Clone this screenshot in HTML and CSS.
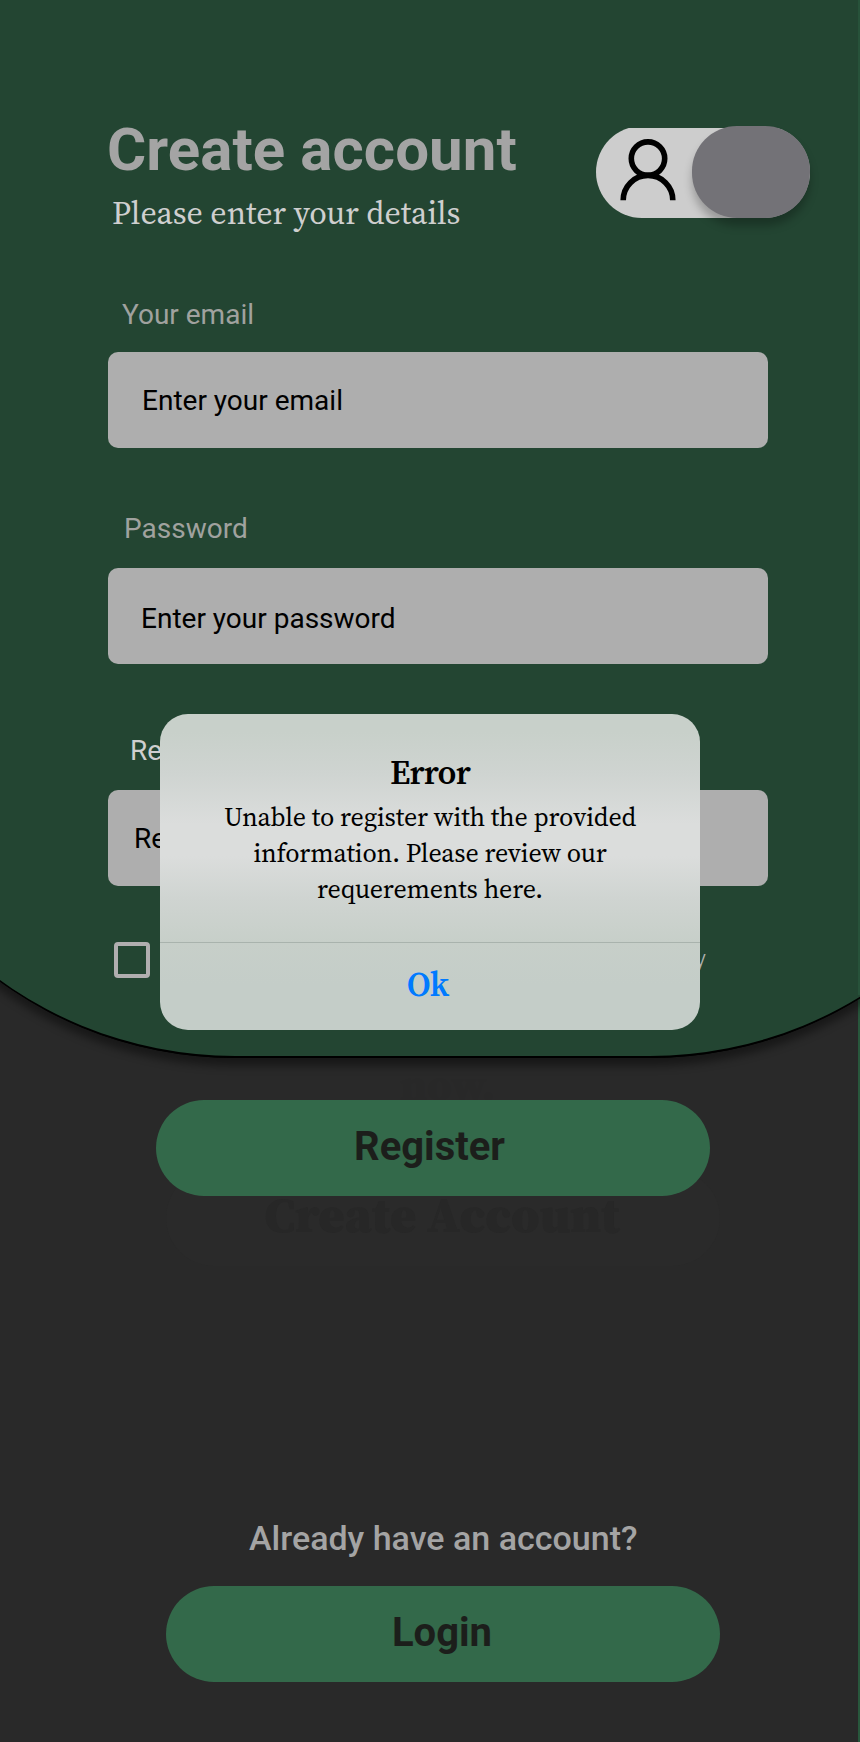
FILE: index.html
```html
<!DOCTYPE html>
<html lang="en">
<head>
<meta charset="utf-8">
<title>Create account</title>
<link rel="stylesheet" href="styles.css">
</head>
<body>
<div class="screen">
  <section class="panel">
    <header class="header">
      <div class="heading">
        <h1 class="title">Create account</h1>
        <p class="subtitle">Please enter your details</p>
      </div>
      <div class="toggle">
        <svg class="user" viewBox="0 0 56 62" width="56" height="62" fill="none" stroke="#000" stroke-width="5.6">
          <circle cx="28" cy="19.6" r="16.7"/>
          <path d="M3.2 61.2a24.8 24.8 0 0 1 49.6 0"/>
        </svg>
        <span class="knob"></span>
      </div>
    </header>
    <label class="label label-email">Your email</label>
    <div class="input input-email">Enter your email</div>
    <label class="label label-password">Password</label>
    <div class="input input-password">Enter your password</div>
    <label class="label label-repeat">Re</label>
    <div class="input input-repeat">Re</div>
    <div class="terms"><span class="checkbox"></span><span class="terms-text">y</span></div>
  </section>
  <section class="actions">
    <div class="ghost-word">now.</div>
    <button class="button register">Register</button>
    <div class="ghost-button">Create Account</div>
    <p class="question">Already have an account?</p>
    <button class="button login">Login</button>
  </section>
  <div class="dialog">
    <div class="dialog-body">
      <h2 class="dialog-title">Error</h2>
      <p class="dialog-text">Unable to register with the provided<br>information. Please review our<br>requerements here.</p>
    </div>
    <div class="dialog-action">Ok</div>
  </div>
</div>
</body>
</html>
```
FILE: styles.css
```css
* { box-sizing: border-box; }
body { margin: 0; font-family: Roboto, sans-serif; background: #292929; }
h1, h2, p { margin: 0; }

.screen {
  position: relative;
  width: 860px;
  height: 1742px;
  overflow: hidden;
  background: linear-gradient(#28573c, #28573c) right / 2px 100% no-repeat #292929;
}

/* Thin brighter edge beside the panel */
.screen::after {
  content: "";
  position: absolute;
  top: 0;
  right: 0;
  width: 2px;
  height: 995px;
  background: #27523a;
}

/* Wider than the screen so that the rounded corners run off both sides */
.panel {
  position: relative;
  width: 1215px;
  height: 1058px;
  margin-left: -165px;
  padding: 114px 282px 0 273px;
  background: #234532;
  border-bottom: 2px solid #000;
  border-radius: 0 0 400px 400px;
  box-shadow: 0 1px 0 -1px #000, 0 8px 9px rgba(0, 0, 0, .42);
}

.header { display: flex; width: 702px; height: 183px; }
.heading { width: 488px; }
.title { color: #a4a4a4; font-size: 60px; line-height: 72px; white-space: nowrap; letter-spacing: .07px; margin-left: -1px; }
.subtitle, .dialog, .ghost-word, .ghost-button { font-family: "Source Serif 4", "Source Serif Pro", "Noto Serif CJK SC", "Noto Serif CJK JP", "Liberation Serif", serif; }
.subtitle { margin: 4px 0 0 4px; color: #cfcfcf; font-size: 32px; line-height: 46px; white-space: nowrap; }

.toggle { display: flex; width: 214px; height: 92px; margin-top: 12px; background: linear-gradient(#cdcdcd, #cdcdcd) 0 2px no-repeat; border-radius: 46px; }
.user { margin: 13px 0 0 24px; }
.knob { width: 118px; height: 92px; margin-left: 16px; border-radius: 45px; background: #737277; box-shadow: 0 8px 8px rgba(0, 0, 0, .25); flex: none; }

.label { display: block; height: 55px; color: #a0a29f; font-size: 28px; line-height: 36px; }
.label-email { padding-left: 14px; }
.label-password { margin-top: 63px; height: 57px; padding-left: 16px; }
.label-repeat { margin-top: 69px; height: 57px; padding-left: 22px; color: #cfcfcf; }
.input { width: 660px; height: 96px; border-radius: 10px; background: #aeaeae; color: #000; font-size: 28px; line-height: 98px; padding-left: 33px; }
.input-email { padding-left: 34px; }
.input-password { line-height: 102px; }
.input-repeat { padding-left: 26px; }
.terms { display: flex; justify-content: space-between; width: 598px; margin-top: 56px; padding-left: 6px; }
.checkbox { width: 36px; height: 36px; border: 4px solid #b0aeaf; border-radius: 4px; }
.terms-text { color: #b0b2b0; font-size: 24px; font-weight: 300; line-height: 34px; }

.actions { position: relative; display: flex; flex-direction: column; height: 684px; padding-left: 156px; }
.ghost-word { height: 42px; padding: 2px 0 0 244px; font-size: 44px; line-height: 50px; font-weight: 700; color: #282828; }
.button { width: 554px; height: 96px; border: 0; padding: 0; border-radius: 48px; background: #33694a; color: #1c1e1b; font: 700 40px/94px Roboto, sans-serif; text-align: center; }
.register { position: relative; z-index: 1; padding: 0 7px 2px 0; }
.ghost-button { width: 554px; height: 96px; margin: -26px 0 0 10px; padding-right: 2px; border-radius: 48px; background: #2a2a2a; color: #272727; font-size: 50px; line-height: 90px; font-weight: 900; text-align: center; white-space: nowrap; }
.question { margin: 248px 0 24px 93px; color: #a4a4a4; font-size: 34px; font-weight: 500; line-height: 48px; }
.login { margin-left: 10px; padding: 0 2px 2px 0; }

.dialog {
  position: absolute;
  left: 160px;
  top: 714px;
  width: 540px;
  height: 316px;
  border-radius: 28px;
  background: linear-gradient(#c8d0ca 0, #c8d0ca 18px, #cfd4d1 60px, #dbdddc 110px, #dbdddc 142px, #cfd4d1 185px, #c7cfc9 228px, #c4cdc8 270px);
  color: #000;
  text-align: center;
}
.dialog-body { height: 229px; padding-top: 35px; border-bottom: 1px solid #a9b3ad; }
.dialog-title { font-size: 34px; line-height: 46px; font-weight: 600; letter-spacing: -.8px; }
.dialog-text { margin-top: 4px; font-size: 26px; line-height: 36px; letter-spacing: -.16px; }
.dialog-action { color: #007aff; font-size: 34px; font-weight: 600; line-height: 82px; letter-spacing: -.8px; padding-right: 5px; }
```
